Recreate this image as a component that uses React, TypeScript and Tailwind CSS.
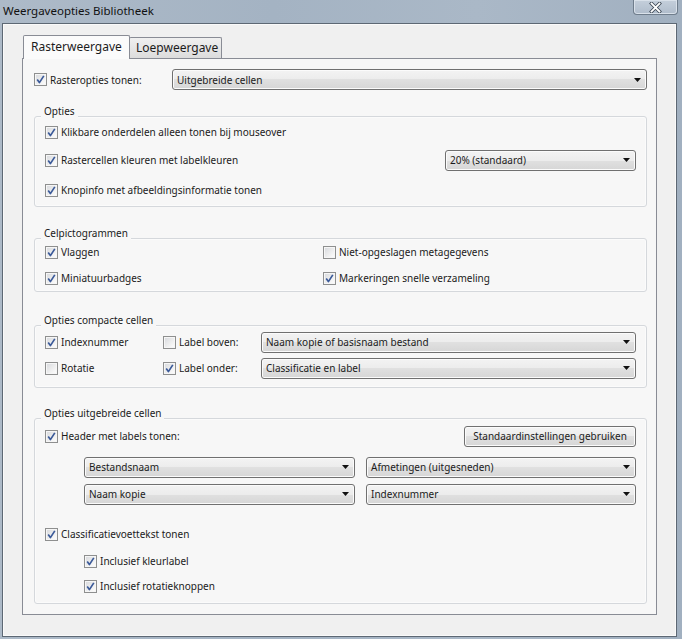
import React from "react";

type Children = { children?: React.ReactNode };

const Check = ({ checked = false }: { checked?: boolean }) => (
  <span className="flex h-[13px] w-[13px] shrink-0 items-center justify-center border border-[#8e8f8f] bg-[linear-gradient(135deg,#d6d8dc_0%,#f4f4f4_70%,#ffffff_100%)] shadow-[inset_0_0_0_1px_#f6f6f6]">
    {checked && (
      <svg width="9" height="9" viewBox="0 0 9 9">
        <path d="M1.2 4.6 L3.4 7.6 L7.8 0.9" fill="none" stroke="#3b5a99" strokeWidth="1.7" strokeLinejoin="round" />
      </svg>
    )}
  </span>
);

const CheckLabel = ({ checked, children }: { checked?: boolean } & Children) => (
  <span className="flex items-center gap-[3px] whitespace-nowrap">
    <Check checked={checked} />
    <span>{children}</span>
  </span>
);

const Select = ({ text, className = "" }: { text: string; className?: string }) => (
  <div
    className={`flex h-[21px] shrink-0 items-center justify-between rounded-[3px] border border-[#707070] bg-[linear-gradient(to_bottom,#f3f3f3_0%,#ececec_50%,#e0e0e0_50%,#d6d6d6_100%)] pl-[4px] pr-[5px] shadow-[inset_0_0_0_1px_#fbfbfb] ${className}`}
  >
    <span className="whitespace-nowrap">{text}</span>
    <svg width="7" height="4" viewBox="0 0 7 4">
      <path d="M0 0 H7 L3.5 4 Z" fill="#111" />
    </svg>
  </div>
);

const Group = ({ title, className = "", children }: { title: string; className?: string } & Children) => (
  <div className={`relative ml-[11px] w-[613px] rounded-[3px] border border-[#d5d8dc] shadow-[inset_0_0_0_1px_#fbfbfb] ${className}`}>
    <span className="absolute left-[6px] top-[-13px] bg-[#f7f7f7] px-[3px] leading-[14px]">{title}</span>
    {children}
  </div>
);

const Row = ({ className = "", children }: { className?: string } & Children) => (
  <div className={`flex h-[22px] items-center ${className}`}>{children}</div>
);

export default function App() {
  return (
    <div className="h-[639px] w-[682px] overflow-hidden bg-[linear-gradient(to_right,#adbac8,#a4b3c3_40%,#aab8c7_70%,#a1b0c0)] font-['Noto_Sans',sans-serif] text-[10px] leading-[14px] text-[#1b1b1b]">
      {/* title bar */}
      <div className="flex h-[23px] items-start justify-between pl-[3px]">
        <span className="pt-[3px] text-[11.5px] leading-[16px] text-[#111]">Weergaveopties Bibliotheek</span>
        <div className="mr-[4px] flex h-[15px] w-[45px] items-center justify-center rounded-b-[4px] border border-t-0 border-[#6f7d8c] bg-[linear-gradient(to_bottom,#c4cfdb,#afbccb)] shadow-[inset_0_0_0_1px_#d9e1ea]">
          <svg width="13" height="11" viewBox="0 0 13 11">
            <path d="M2.5 1.5 L10.5 9.5 M10.5 1.5 L2.5 9.5" stroke="#3a4552" strokeWidth="3.4" strokeLinecap="square" />
            <path d="M2.5 1.5 L10.5 9.5 M10.5 1.5 L2.5 9.5" stroke="#ffffff" strokeWidth="1.8" strokeLinecap="square" />
          </svg>
        </div>
      </div>

      {/* client area */}
      <div className="ml-[2px] h-[614px] w-[675px] border border-[#5d6874] bg-[#f0f0f0] pt-[11px] shadow-[inset_0_0_0_1px_#fafafa]">
        {/* tabs */}
        <div className="ml-[20px] flex items-end">
          <div className="relative z-10 -mb-px flex h-[24px] w-[107px] items-start rounded-t-[2px] border border-b-0 border-[#898c95] bg-[#fbfbfb] pl-[7px] pt-[3px] text-[12px] leading-[16px]">
            Rasterweergave
          </div>
          <div className="-ml-px flex h-[21px] w-[93px] items-start rounded-t-[2px] border border-b-0 border-[#898c95] bg-[linear-gradient(to_bottom,#f0f0f0,#dcdcdc)] pl-[6px] pt-[2px] text-[12px] leading-[16px]">
            Loepweergave
          </div>
        </div>

        {/* tab page */}
        <div className="ml-[19px] h-[557px] w-[635px] border border-[#898c95] bg-[#f7f7f7]">
          <div className="mt-[10px] flex h-[21px] items-center pl-[11px] pr-[9px]">
            <CheckLabel checked>Rasteropties tonen:</CheckLabel>
            <Select text="Uitgebreide cellen" className="ml-auto w-[475px]" />
          </div>

          <Group title="Opties" className="mt-[26px] h-[91px]">
            <Row className="mt-[4px] pl-[10px]">
              <CheckLabel checked>Klikbare onderdelen alleen tonen bij mouseover</CheckLabel>
            </Row>
            <Row className="mt-[6px] pl-[10px] pr-[10px]">
              <CheckLabel checked>Rastercellen kleuren met labelkleuren</CheckLabel>
              <Select text="20% (standaard)" className="ml-auto w-[191px]" />
            </Row>
            <Row className="mt-[8px] pl-[10px]">
              <CheckLabel checked>Knopinfo met afbeeldingsinformatie tonen</CheckLabel>
            </Row>
          </Group>

          <Group title="Celpictogrammen" className="mt-[31px] h-[54px]">
            <div className="grid grid-cols-[278px_1fr] pl-[10px]">
              <Row className="mt-[2px]">
                <CheckLabel checked>Vlaggen</CheckLabel>
              </Row>
              <Row className="mt-[2px]">
                <CheckLabel>Niet-opgeslagen metagegevens</CheckLabel>
              </Row>
              <Row className="mt-[4px]">
                <CheckLabel checked>Miniatuurbadges</CheckLabel>
              </Row>
              <Row className="mt-[4px]">
                <CheckLabel checked>Markeringen snelle verzameling</CheckLabel>
              </Row>
            </div>
          </Group>

          <Group title="Opties compacte cellen" className="mt-[33px] h-[63px]">
            <Row className="mt-[5px] pl-[10px] pr-[10px]">
              <span className="w-[118px]">
                <CheckLabel checked>Indexnummer</CheckLabel>
              </span>
              <span className="w-[98px]">
                <CheckLabel>Label boven:</CheckLabel>
              </span>
              <Select text="Naam kopie of basisnaam bestand" className="ml-auto w-[375px]" />
            </Row>
            <Row className="mt-[4px] pl-[10px] pr-[10px]">
              <span className="w-[118px]">
                <CheckLabel>Rotatie</CheckLabel>
              </span>
              <span className="w-[98px]">
                <CheckLabel checked>Label onder:</CheckLabel>
              </span>
              <Select text="Classificatie en label" className="ml-auto w-[375px]" />
            </Row>
          </Group>

          <Group title="Opties uitgebreide cellen" className="mt-[30px] h-[186px]">
            <Row className="mt-[6px] pl-[10px] pr-[10px]">
              <CheckLabel checked>Header met labels tonen:</CheckLabel>
              <button className="ml-auto flex h-[21px] w-[172px] items-center justify-center rounded-[3px] border border-[#707070] bg-[linear-gradient(to_bottom,#f3f3f3_0%,#ececec_50%,#e0e0e0_50%,#d6d6d6_100%)] shadow-[inset_0_0_0_1px_#fbfbfb]">
                Standaardinstellingen gebruiken
              </button>
            </Row>
            <Row className="mt-[9px] pl-[49px] pr-[10px]">
              <Select text="Bestandsnaam" className="w-[271px]" />
              <Select text="Afmetingen (uitgesneden)" className="ml-auto w-[270px]" />
            </Row>
            <Row className="mt-[5px] pl-[49px] pr-[10px]">
              <Select text="Naam kopie" className="w-[271px]" />
              <Select text="Indexnummer" className="ml-auto w-[270px]" />
            </Row>
            <Row className="mt-[18px] pl-[10px]">
              <CheckLabel checked>Classificatievoettekst tonen</CheckLabel>
            </Row>
            <Row className="mt-[5px] pl-[49px]">
              <CheckLabel checked>Inclusief kleurlabel</CheckLabel>
            </Row>
            <Row className="mt-[3px] pl-[49px]">
              <CheckLabel checked>Inclusief rotatieknoppen</CheckLabel>
            </Row>
          </Group>
        </div>
      </div>
    </div>
  );
}
